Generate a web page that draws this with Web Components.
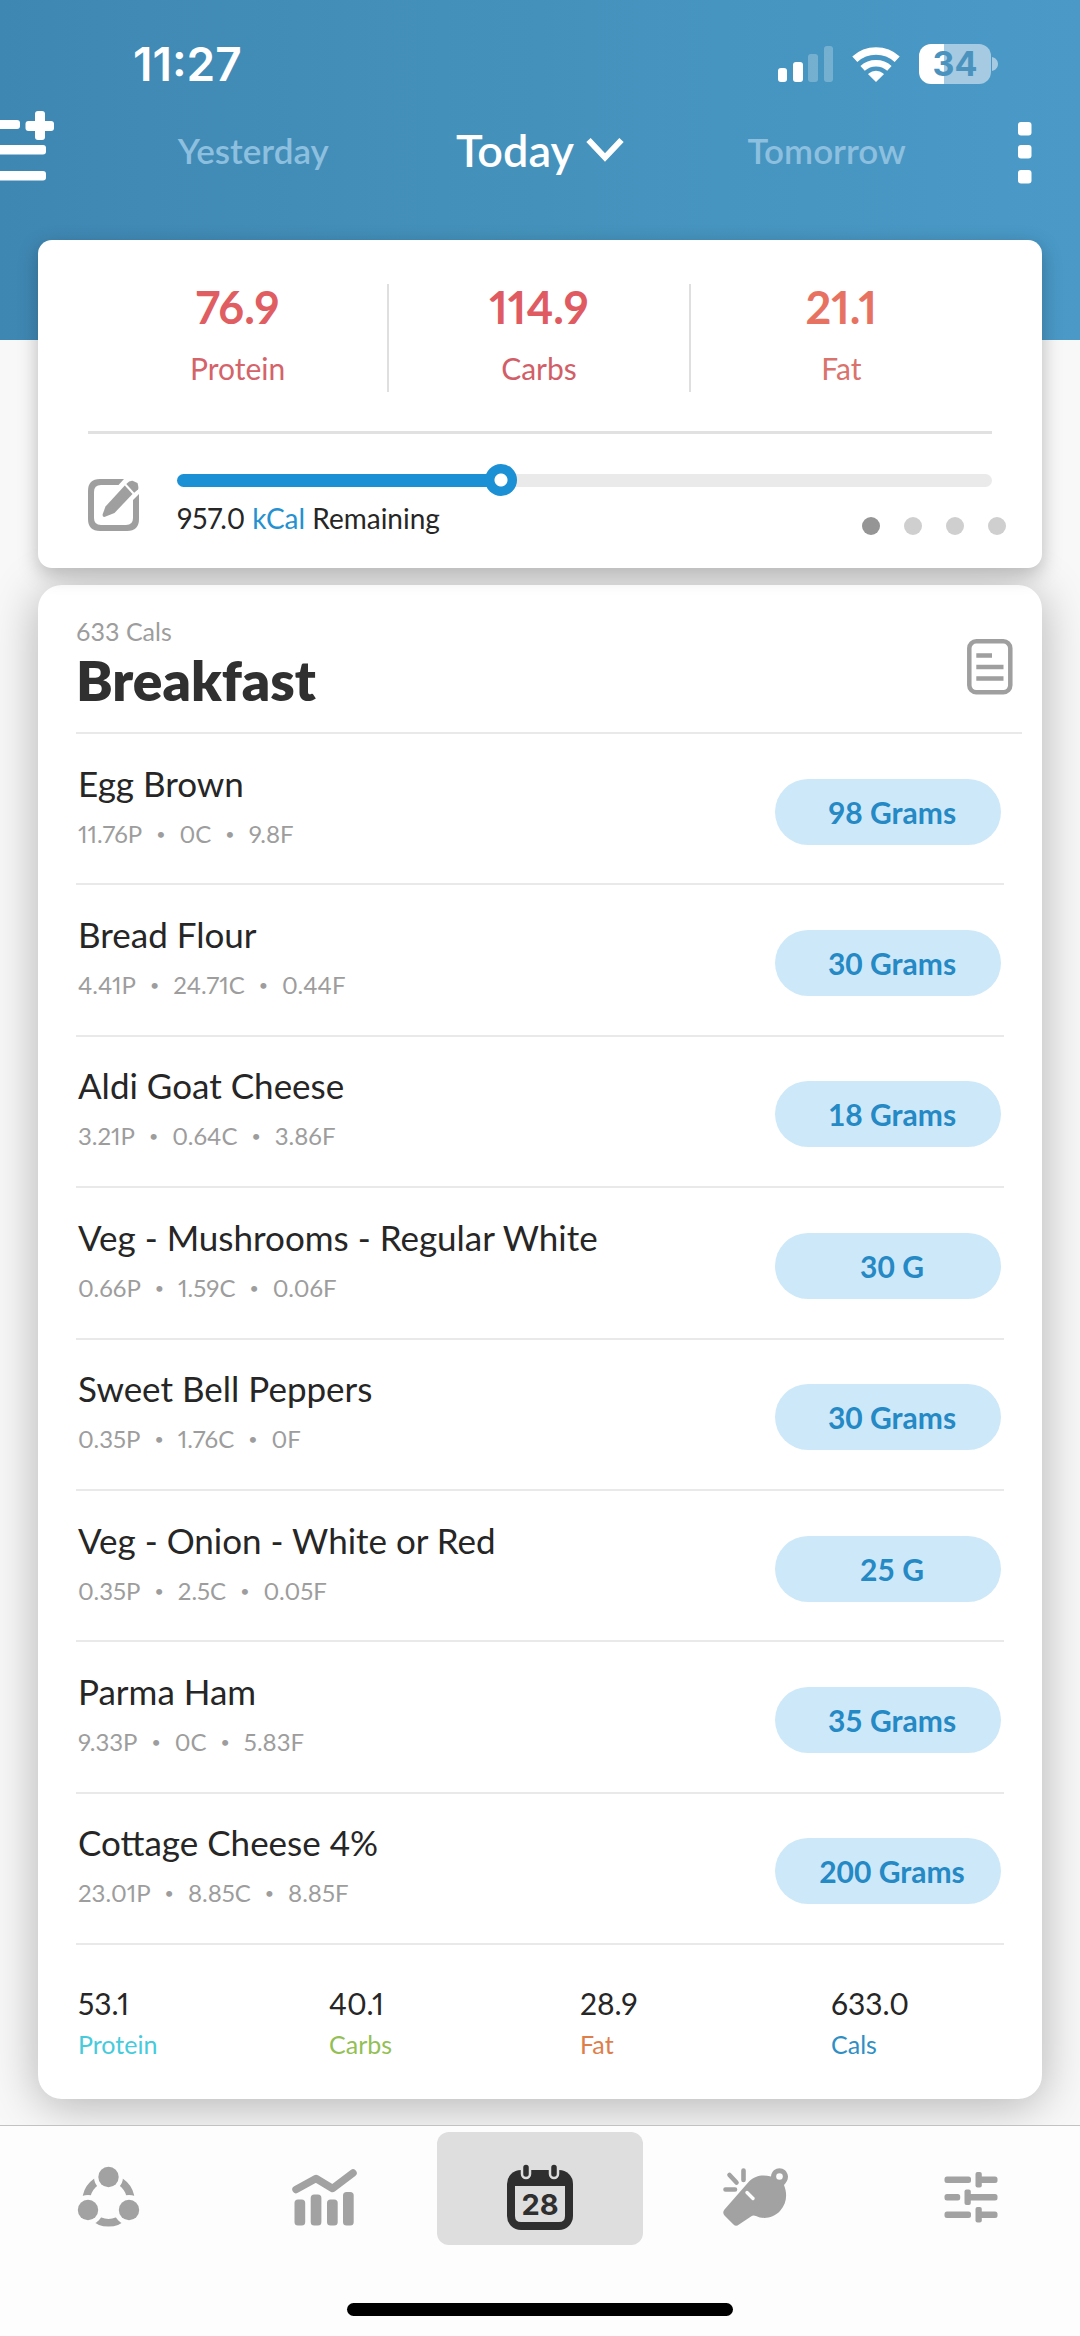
<!DOCTYPE html>
<html lang="en">
<head>
<meta charset="utf-8">
<meta name="viewport" content="width=device-width, initial-scale=1">
<title>Food diary</title>
<style>
  body { margin: 0; background: #f8f8f8; font-family: Lato, "Open Sans", sans-serif; color: #262626; }
</style>
</head>
<body>
<diary-app>
  <status-bar slot="top" time="11:27" battery="34"></status-bar>
  <day-nav slot="top" previous="Yesterday" current="Today" next="Tomorrow"></day-nav>

  <summary-card remaining="957.0" unit="kCal">
    <macro-stat value="76.9" label="Protein" style="--value:#e05d62;--label:#d4636a"></macro-stat>
    <macro-stat value="114.9" label="Carbs" style="--value:#e05a62;--label:#d25f68"></macro-stat>
    <macro-stat value="21.1" label="Fat" style="--value:#e87262;--label:#d9736c"></macro-stat>
  </summary-card>

  <meal-card name="Breakfast" cals="633 Cals">
    <food-row name="Egg Brown" macros="11.76P,0C,9.8F" amount="98 Grams"></food-row>
    <food-row name="Bread Flour" macros="4.41P,24.71C,0.44F" amount="30 Grams"></food-row>
    <food-row name="Aldi Goat Cheese" macros="3.21P,0.64C,3.86F" amount="18 Grams"></food-row>
    <food-row name="Veg - Mushrooms - Regular White" macros="0.66P,1.59C,0.06F" amount="30 G"></food-row>
    <food-row name="Sweet Bell Peppers" macros="0.35P,1.76C,0F" amount="30 Grams"></food-row>
    <food-row name="Veg - Onion - White or Red" macros="0.35P,2.5C,0.05F" amount="25 G"></food-row>
    <food-row name="Parma Ham" macros="9.33P,0C,5.83F" amount="35 Grams"></food-row>
    <food-row name="Cottage Cheese 4%" macros="23.01P,8.85C,8.85F" amount="200 Grams"></food-row>
    <meal-total slot="totals" value="53.1" label="Protein" style="--label:#45cbdc"></meal-total>
    <meal-total slot="totals" value="40.1" label="Carbs" style="--label:#93bf55"></meal-total>
    <meal-total slot="totals" value="28.9" label="Fat" style="--label:#dd7f4b"></meal-total>
    <meal-total slot="totals" value="633.0" label="Cals" style="--label:#2f8fc4"></meal-total>
  </meal-card>

  <tab-bar slot="bottom"></tab-bar>
</diary-app>

<script>
const define = (tag, render) => customElements.define(tag, class extends HTMLElement {
  connectedCallback() {
    if (this.shadowRoot) return;
    const t = document.createElement('template');
    t.innerHTML = `<style>*{box-sizing:border-box}button{font:inherit;color:inherit;background:none;border:0;padding:0;margin:0;cursor:pointer}svg{display:block}</style>` +
      render(name => this.getAttribute(name));
    this.attachShadow({ mode: 'open' }).append(t.content.cloneNode(true));
  }
});

define('diary-app', () => `
<style>
  :host { display: flex; flex-direction: column; min-height: 100vh;
    background: linear-gradient(90deg, #3f87b3, #4492bc 50%, #4a99c7) 0 0 / 100% 340px no-repeat; }
  header { padding: 40px 0 28px; }
  main { flex: 1; display: flex; flex-direction: column; gap: 17px; padding: 0 38px 26px; }
</style>
<header><slot name="top"></slot></header>
<main><slot></slot></main>
<slot name="bottom"></slot>`);

define('status-bar', a => `
<style>
  :host { display: flex; align-items: center; justify-content: space-between; height: 48px; padding: 0 82px 0 133px; color: #fff; font-family: Inter, sans-serif; }
  .time { font-size: 46px; font-weight: 600; line-height: 48px; }
  .icons { display: flex; align-items: center; gap: 19px; }
  .battery { display: flex; align-items: center; gap: 1px; }
  .cell { width: 72px; height: 40px; border-radius: 12px; display: flex; align-items: center; justify-content: center;
    background: linear-gradient(90deg, #fff 25px, #a5cae1 25px); color: #4a93bf; font-size: 34px; font-weight: 700; line-height: 40px; }
</style>
<span class="time">${a('time')}</span>
<span class="icons">
  <svg width="55" height="36" viewBox="0 0 55 36" fill="#fff" aria-label="Signal">
    <rect x="0" y="22" width="9" height="14" rx="3"/><rect x="15" y="16" width="10" height="20" rx="3"/>
    <g opacity=".25"><rect x="30" y="8" width="10" height="28" rx="3"/><rect x="46" y="0" width="9" height="36" rx="3"/></g>
  </svg>
  <svg width="48" height="36" viewBox="0 0 48 36" fill="none" stroke="#fff" aria-label="Wi-Fi">
    <path d="M2.800 13.2A31.500 31.500 0 0 1 45.200 13.2" stroke-width="7.500"/><path d="M10.600 22.300A20 20 0 0 1 37.400 22.300" stroke-width="6.500"/>
    <path d="M24 36L16.400 28.6A1.5 1.5 0 0 1 16.6 27.4A11.5 11.5 0 0 1 31.4 27.4A1.5 1.5 0 0 1 31.6 28.6Z" fill="#fff" stroke="none"/>
  </svg>
  <span class="battery"><span class="cell">${a('battery')}</span>
    <svg width="6" height="14" viewBox="0 0 6 14"><path d="M0 0C8 2 8 12 0 14Z" fill="#a5cae1"/></svg></span>
</span>`);

define('day-nav', a => `
<style>
  :host { display: grid; grid-template-columns: 110px 1fr 1fr 1fr 110px; align-items: center; height: 124px; color: #fff; }
  button { justify-self: center; display: flex; align-items: center; gap: 12px; font-weight: 600; font-size: 35px; line-height: 40px; }
  .side { color: #8dbfdf; }
  .current { font-size: 45px; line-height: 52px; }
  .menu { justify-self: start; padding-bottom: 8px; }
  .more { justify-self: end; padding: 6px 48px 0 0; }
</style>
<button class="menu" aria-label="Menu"><svg width="54" height="70" viewBox="0 0 54 70" fill="#fff">
  <rect x="-8" y="9" width="28" height="9" rx="3"/><rect x="-8" y="34" width="54" height="9.500" rx="3"/><rect x="-8" y="60" width="54" height="9.500" rx="3"/>
  <rect x="25.500" y="10" width="28.500" height="10" rx="3"/><rect x="35" y="0" width="10" height="29" rx="3"/></svg></button>
<button class="side">${a('previous')}</button>
<button class="current">${a('current')}<svg width="38" height="26" viewBox="0 0 38 26" fill="none" stroke="#fff" stroke-width="6"><path d="M2.500 3L19 20.500L35.500 3"/></svg></button>
<button class="side">${a('next')}</button>
<button class="more" aria-label="More"><svg width="14" height="62" viewBox="0 0 14 62" fill="#fff"><rect width="13.500" height="13.500" rx="3"/><rect y="23" width="13.500" height="13.500" rx="3"/><rect y="48" width="13.500" height="13.500" rx="3"/></svg></button>`);

define('macro-stat', a => `
<style>
  :host { display: flex; flex-direction: column; align-items: center; gap: 20px; height: 108px; font-variant-numeric: proportional-nums; }
  :host(:not(:last-child)) { border-right: 2px solid #dfdfdf; }
  b { font-size: 45px; line-height: 46px; color: var(--value); }
  span { font-size: 30px; line-height: 36px; color: var(--label); }
</style>
<b>${a('value')}</b><span>${a('label')}</span>`);

define('summary-card', a => `
<style>
  :host { display: block; position: relative; z-index: 1; padding: 44px 50px 33px; background: #fff; border-radius: 14px; box-shadow: 0 6px 20px rgba(0,0,0,.26); }
  .stats { display: grid; grid-template-columns: repeat(3, 1fr); padding-bottom: 39px; border-bottom: 3px solid #e1e1e1; }
  .goal { display: flex; align-items: flex-end; gap: 37px; padding-top: 30px; }
  .edit { margin-bottom: 4px; }
  .progress { flex: 1; }
  input { appearance: none; display: block; width: 100%; height: 32px; margin: 0 0 5px; background: none; }
  input::-webkit-slider-runnable-track { height: 13px; border-radius: 7px; background: linear-gradient(90deg, #1c90d4 40%, #eaeaea 40%); }
  input::-webkit-slider-thumb { appearance: none; width: 32px; height: 32px; margin-top: -10px; border-radius: 50%; background: radial-gradient(circle, #fff 6px, #1c90d4 7px); }
  .line { display: flex; align-items: flex-end; justify-content: space-between; margin-right: -14px; }
  label { font-size: 28px; line-height: 34px; font-variant-numeric: proportional-nums; }
  em { font-style: normal; color: #2591d0; }
  .dots { display: flex; gap: 24px; }
  .dots button { width: 18px; height: 18px; border-radius: 50%; background: #cfcfcf; }
  .dots button:first-child { background: #959595; }
</style>
<div class="stats"><slot></slot></div>
<div class="goal">
  <button class="edit" aria-label="Edit goals"><svg width="52" height="52" viewBox="0 0 52 52" fill="#9f9f9f">
    <path d="M36 0H12Q0 0 0 12V40Q0 52 12 52H39Q51 52 51 40V15L45 21V39Q45 46 38 46H13Q6 46 6 39V13Q6 6 13 6H30.500Z"/>
    <path d="M14.600 35.500L17.500 27.500L36.800 6.500L44.500 15L26.500 34L17 37.800Q14.300 38.300 14.600 35.500Z"/>
    <path d="M38.300 5Q41.500 1.500 44.500 1.800L49.500 4Q51 9 50 10.500L46.200 13.700Z"/></svg></button>
  <div class="progress">
    <input id="goal" type="range" min="0" max="1000" value="393">
    <div class="line">
      <label for="goal">${a('remaining')} <em>${a('unit')}</em> Remaining</label>
      <div class="dots"><button aria-label="Page 1"></button><button aria-label="Page 2"></button><button aria-label="Page 3"></button><button aria-label="Page 4"></button></div>
    </div>
  </div>
</div>`);

define('meal-card', a => `
<style>
  :host { flex: 1; display: flex; flex-direction: column; background: #fff; border-radius: 24px; box-shadow: 0 6px 48px rgba(0,0,0,.29); }
  header { display: flex; align-items: flex-end; justify-content: space-between; margin: 31px 20px 0 38px; padding: 0 9px 22px 0; border-bottom: 2px solid #e9e9e9; }
  .cals { font-size: 25px; line-height: 30px; color: #9d9d9d; margin: 0 0 4px; }
  h1 { margin: 0; font-size: 55px; font-weight: 800; line-height: 60px; color: #303030; }
  header button { margin-bottom: 15px; }
  .list { flex: 1; display: grid; grid-auto-rows: 1fr; margin: 0 38px; }
  .totals { display: grid; grid-template-columns: repeat(4, 1fr); padding: 40px 0; }
</style>
<header>
  <div><p class="cals">${a('cals')}</p><h1>${a('name')}</h1></div>
  <button aria-label="Notes"><svg width="46" height="56" viewBox="0 0 46 56" fill="none" stroke="#9f9f9f" stroke-width="4.500">
    <rect x="2.300" y="2.300" width="41" height="51" rx="7"/><path d="M9.300 16.500H25M9.300 28H36.500M9.300 39.500H36.500"/></svg></button>
</header>
<div class="list"><slot></slot></div>
<div class="totals"><slot name="totals"></slot></div>`);

define('food-row', a => `
<style>
  :host { display: flex; align-items: center; justify-content: space-between; padding: 6px 3px 0 2px; border-bottom: 2px solid #e9e9e9; }
  .text { padding-bottom: 12px; }
  .name { font-size: 35px; line-height: 40px; }
  .macros { display: flex; gap: 14px; margin-top: 16px; font-size: 24px; line-height: 30px; color: #9d9d9d; font-variant-numeric: proportional-nums; }
  .macros i { font-style: normal; font-size: 16px; }
  button { width: 226px; height: 66px; padding-left: 8px; border-radius: 33px; background: #cde8f9; color: #2489c4; font-size: 30px; line-height: 36px; font-weight: 700; }
</style>
<div class="text"><div class="name">${a('name')}</div>
<div class="macros">${a('macros').split(',').map(m => `<span>${m}</span>`).join('<i>•</i>')}</div></div>
<button>${a('amount')}</button>`);

define('meal-total', a => `
<style>
  :host { display: flex; flex-direction: column; gap: 8px; padding-left: 40px; }
  .v { font-size: 30px; line-height: 36px; font-variant-numeric: proportional-nums; }
  .l { font-size: 25px; line-height: 30px; color: var(--label); }
</style>
<span class="v">${a('value')}</span><span class="l">${a('label')}</span>`);

define('tab-bar', () => `
<style>
  :host { position: relative; display: block; padding: 6px 0 20px; border-top: 1px solid #c2c2c2; background: #fdfdfd; }
  nav { display: grid; grid-template-columns: repeat(5, 1fr); }
  nav button { display: flex; justify-content: center; align-items: center; height: 113px; margin: 0 5px; padding-top: 17px; border-radius: 12px; }
  .active { background: #dedede; }
  svg { width: 72px; height: 72px; fill: #a2a2a2; }
  text { font: 700 29px Inter, sans-serif; fill: #2f2f2f; }
  .home { width: 386px; height: 13px; margin: 58px auto 0; border-radius: 7px; background: #000; }
</style>
<nav>
  <button aria-label="Community"><svg viewBox="0 0 72 72">
    <circle cx="36.500" cy="39.500" r="22.300" fill="none" stroke="#a2a2a2" stroke-width="7.600"/>
    <g fill="#fdfdfd"><circle cx="36.500" cy="16" r="14.500"/><circle cx="16" cy="49" r="15"/><circle cx="57" cy="49" r="15"/></g>
    <circle cx="36.500" cy="16" r="10.200"/><circle cx="16" cy="49" r="10.200"/><circle cx="57" cy="49" r="10.200"/></svg></button>
  <button aria-label="Statistics"><svg viewBox="0 0 72 72">
    <path d="M8 28.500L28 17.500L44.500 27.500L65 12" fill="none" stroke="#a2a2a2" stroke-width="7.500" stroke-linecap="round" stroke-linejoin="round"/>
    <rect x="6.500" y="38.500" width="10.700" height="26" rx="3.500"/><rect x="22.700" y="33.500" width="10.700" height="31" rx="3.500"/><rect x="39" y="38.500" width="10.700" height="26" rx="3.500"/><rect x="55" y="31" width="10.700" height="33.500" rx="3.500"/></svg></button>
  <button class="active" aria-label="Diary" aria-current="page"><svg viewBox="0 0 72 72">
    <rect x="3" y="9" width="66" height="60" rx="14" fill="#2f2f2f"/><path d="M11 25H61V55Q61 61 55 61H17Q11 61 11 55Z" fill="#dedede"/>
    <path d="M22 6.500V13M50 6.500V13" stroke="#dedede" stroke-width="10.500" stroke-linecap="round"/><path d="M22 6.500V13M50 6.500V13" stroke="#2f2f2f" stroke-width="5.500" stroke-linecap="round"/>
    <text x="36" y="54" text-anchor="middle">28</text></svg></button>
  <button aria-label="Coach"><svg viewBox="0 0 72 72">
    <path d="M51 15.500C52 4.500 67 4.500 68 15.500C68 19.500 66 21.500 64 24C67.500 33 67 42 60 50C53 57.500 43 58.500 36 55C34 54 32.500 54.300 31 55.500L19 63.500Q16 66 13.500 63.500L4.500 54.500Q2 51.500 4.500 48.500L29 20.500C35.500 14 43 13.500 51 15.500Z"/>
    <circle cx="59.500" cy="15.500" r="3.300" fill="#fdfdfd"/>
    <path d="M27 31.500L33 37.500" stroke="#fdfdfd" stroke-width="3.400" stroke-linecap="round"/>
    <path d="M23.500 9.500V19M9.500 14L16.500 21.500M5.500 28.500H15" stroke="#a2a2a2" stroke-width="4.600" stroke-linecap="round"/></svg></button>
  <button aria-label="Settings"><svg viewBox="0 0 72 72">
    <g id="r"><rect x="8.500" y="15.500" width="26.500" height="6.500" rx="2.500"/><rect x="39.500" y="11" width="6.300" height="15.500" rx="2"/><rect x="42" y="15.500" width="19.500" height="6.500" rx="2.500"/></g>
    <rect x="8.500" y="33" width="15.700" height="6.500" rx="2.500"/><rect x="28.500" y="28.500" width="6.300" height="15.500" rx="2"/><rect x="31" y="33" width="30.500" height="6.500" rx="2.500"/>
    <use href="#r" y="35"/></svg></button>
</nav>
<div class="home"></div>`);
</script>
</body>
</html>
